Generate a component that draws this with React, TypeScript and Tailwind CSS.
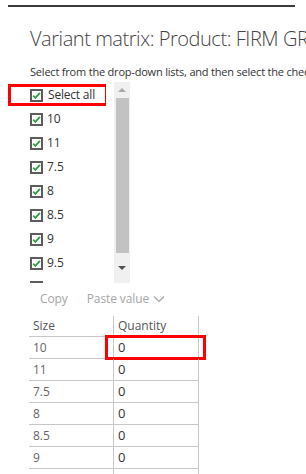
import React from "react";

const sizes = ["10", "11", "7.5", "8", "8.5", "9", "9.5"];
const rows = ["10", "11", "7.5", "8", "8.5", "9", ""];

function Check() {
  return (
    <svg width="13" height="13" viewBox="0 0 13 13" className="shrink-0">
      <rect x="1" y="1" width="11" height="11" fill="#fff" stroke="#5c5c5c" strokeWidth="2" />
      <path d="M3.2 6.6 L5.4 8.9 L9.9 3.9" fill="none" stroke="#2f9e44" strokeWidth="1.7" />
    </svg>
  );
}

export default function App() {
  return (
    <div
      className="relative h-[474px] w-[306px] overflow-hidden bg-white"
      style={{ fontFamily: '"Open Sans", "Noto Sans", sans-serif' }}
    >
      <div className="ml-[8px] mt-[5px] h-[2px] w-[287px] bg-[#3a3a3a]" />

      <h1 className="mt-[18px] whitespace-nowrap pl-[30px] text-[20px] font-light leading-[28px] tracking-[-0.45px] text-[#444]">
        Variant matrix: Product: FIRM GRAY SHOES
      </h1>
      <p className="mt-[11px] whitespace-nowrap pl-[30px] text-[11px] leading-[16px] tracking-[-0.2px] text-[#333]">
        Select from the drop-down lists, and then select the check boxes
      </p>

      <div className="mt-[2px] flex h-[201px]">
        <div className="w-[106px] overflow-hidden pt-[2px]">
          <div className="ml-[8px] flex h-[22px] w-[100px] items-center gap-[5px] border-[3px] border-[#f00] pl-[19px] text-[12px] tracking-[-0.2px] text-[#333]">
            <Check />
            <span>Select all</span>
          </div>
          {sizes.map((s) => (
            <div key={s} className="ml-[30px] mt-[2px] flex h-[22px] items-center gap-[4px] text-[12px] text-[#333]">
              <Check />
              <span>{s}</span>
            </div>
          ))}
          <div className="ml-[30px] mt-[2px] flex h-[22px] items-center">
            <Check />
          </div>
        </div>
        <div className="ml-[8px] flex w-[16px] flex-col items-center bg-[#f0f0f0]">
          <div className="flex h-[16px] w-full items-center justify-center">
            <div className="h-0 w-0 border-x-[4px] border-b-[4px] border-x-transparent border-b-[#a8a8a8]" />
          </div>
          <div className="h-[155px] w-[13px] bg-[#c2c2c2]" />
          <div className="flex flex-1 items-center justify-center">
            <div className="h-0 w-0 border-x-[4px] border-t-[4px] border-x-transparent border-t-[#505050]" />
          </div>
        </div>
      </div>

      <div className="mt-[7px] flex h-[18px] items-center text-[12px] tracking-[-0.1px] text-[#a6a6a6]">
        <span className="ml-[40px]">Copy</span>
        <span className="ml-[19px]">Paste value</span>
        <svg width="12" height="8" viewBox="0 0 12 8" className="ml-[4px]">
          <path d="M1 1.5 L6 6.5 L11 1.5" fill="none" stroke="#a6a6a6" strokeWidth="1.2" />
        </svg>
      </div>

      <div className="ml-[29px] mt-[8px] w-[170px]">
        <div className="flex h-[21px] border-b border-[#c8c8c8] text-[12px] text-[#555]">
          <div className="flex w-[84px] items-center pl-[4px]">Size</div>
          <div className="flex w-[86px] items-center border-x border-[#c8c8c8] pl-[4px]">Quantity</div>
        </div>
        {rows.map((r, i) => (
          <div key={i} className="flex h-[22px] border-b border-[#c8c8c8]">
            <div className="flex w-[84px] items-center pl-[4px] text-[12px] text-[#666]">{r}</div>
            <div className="relative flex w-[86px] items-center border-x border-[#c8c8c8] pl-[4px] text-[13px] text-[#333]">
              {r && "0"}
              {i === 0 && (
                <div className="absolute -left-[9px] -right-[8px] -top-[2px] -bottom-[2px] border-[3px] border-[#f00]" />
              )}
            </div>
          </div>
        ))}
      </div>
    </div>
  );
}
